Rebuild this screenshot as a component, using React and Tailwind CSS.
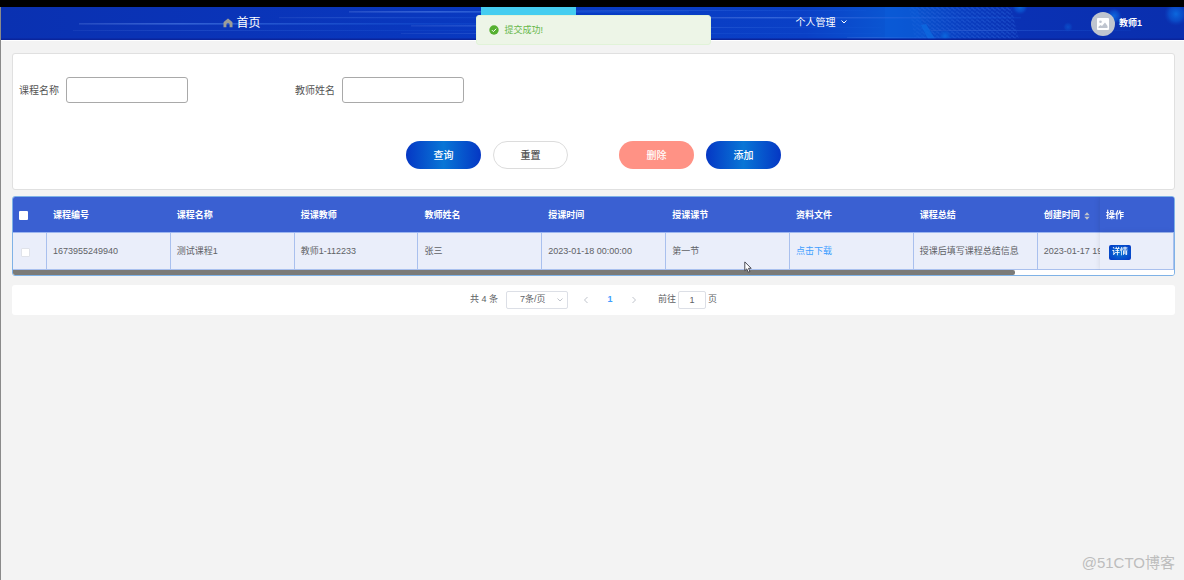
import { useState } from 'react';

const columns = ['课程编号', '课程名称', '授课教师', '教师姓名', '授课时间', '授课课节', '资料文件', '课程总结'];

const rows = [
  {
    id: '1673955249940',
    course: '测试课程1',
    teacher: '教师1-112233',
    name: '张三',
    time: '2023-01-18 00:00:00',
    section: '第一节',
    file: '点击下载',
    summary: '授课后填写课程总结信息',
    created: '2023-01-17 19:',
  },
];

const thClass = 'h-[36px] border-b border-[#9db6f0] bg-[#3a60d2] px-[6px] pt-[2px] text-left font-bold text-white whitespace-nowrap';
const tdClass = 'h-[37px] border-r border-b border-[#a9c0ee] bg-[#eaeefa] px-[6px] pt-[2px] whitespace-nowrap';

const HeaderBackdrop = () => (
  <svg className="absolute inset-0 h-full w-full" viewBox="0 0 1183 33" preserveAspectRatio="none" aria-hidden="true">
    <defs>
      <linearGradient id="base" x1="0" x2="1" y1="0" y2="0">
        <stop offset="0" stopColor="#0a31b1" />
        <stop offset="0.2" stopColor="#0a34b8" />
        <stop offset="0.5" stopColor="#083bc4" />
        <stop offset="0.68" stopColor="#0a40c6" />
        <stop offset="0.75" stopColor="#0a56d2" />
        <stop offset="0.78" stopColor="#0a50cc" />
        <stop offset="0.81" stopColor="#0a40c2" />
        <stop offset="0.86" stopColor="#0a31b4" />
        <stop offset="1" stopColor="#0a2fae" />
      </linearGradient>
      <linearGradient id="streak" x1="0" x2="1" y1="0" y2="0">
        <stop offset="0" stopColor="#5f82e0" stopOpacity="0.3" />
        <stop offset="0.25" stopColor="#4474e0" stopOpacity="0.7" />
        <stop offset="1" stopColor="#1860e0" stopOpacity="0.2" />
      </linearGradient>
      <radialGradient id="glow">
        <stop offset="0" stopColor="#0c68de" />
        <stop offset="0.6" stopColor="#0a55d0" stopOpacity="0.7" />
        <stop offset="1" stopColor="#0a40c0" stopOpacity="0" />
      </radialGradient>
      <pattern id="mesh" width="5" height="4" patternUnits="userSpaceOnUse">
        <path d="M0 1h2l1 2h2" stroke="#2d68dc" strokeWidth="0.8" fill="none" />
      </pattern>
    </defs>
    <rect width="1183" height="33" fill="url(#base)" />
    <path d="M908 0h102l8 33H914z" fill="url(#mesh)" opacity="0.6" />
    <path d="M884 0h32l10 33h-42z" fill="#0a60dc" opacity="0.4" />
    <path d="M920 18l5-1 9 15h-7z" fill="#0c6ce2" opacity="0.7" />
    <g fill="url(#streak)">
      <rect x="78" y="16" width="400" height="1.6" />
      <rect x="348" y="4" width="340" height="1.6" />
      <rect x="278" y="10" width="300" height="1.2" opacity="0.5" />
      <rect x="72" y="23" width="500" height="1" opacity="0.4" />
      <rect x="410" y="18" width="300" height="1.6" opacity="0.6" />
      <rect x="400" y="26" width="480" height="1" opacity="0.5" />
      <rect x="575" y="3" width="290" height="1" opacity="0.6" />
      <rect x="690" y="10" width="330" height="1.4" />
      <rect x="640" y="20" width="240" height="1" opacity="0.5" />
      <rect x="930" y="23" width="200" height="1" opacity="0.6" />
      <rect x="846" y="30" width="110" height="1.2" opacity="0.6" />
    </g>
    <circle cx="944" cy="29" r="7" fill="url(#glow)" />
    <circle cx="1019" cy="0" r="8" fill="url(#glow)" />
    <circle cx="1113" cy="9" r="8" fill="url(#glow)" />
    <circle cx="1067" cy="20" r="5" fill="url(#glow)" opacity="0.5" />
    <circle cx="1175" cy="7" r="12" fill="url(#glow)" />
    <rect y="31.5" width="1183" height="1.5" fill="#0a259c" />
  </svg>
);

const Chevron = ({ d, className }) => (
  <svg className={className} viewBox="0 0 8 8" fill="none" stroke="currentColor" aria-hidden="true">
    <path d={d} />
  </svg>
);

const Header = () => (
  <header className="relative flex h-[34px] items-stretch border-b border-white text-white">
    <HeaderBackdrop />
    <nav className="relative ml-[8.2%] grid flex-1 grid-cols-[287fr_287fr_299fr] justify-items-center">
      <a href="#home" className="flex items-center gap-1 pb-[2px] text-[12px]">
        <svg className="h-[10px] w-[10px]" viewBox="0 0 10 10" fill="#9c9c98" aria-hidden="true">
          <path d="M5 .6Q5.400 .6 5.700 .9L9 3.800Q9.500 4.300 9.500 5V9.200H6.600V6.500Q6.600 5 5 5T3.400 6.500V9.200H.5V5Q.5 4.300 1 3.800L4.300 .9Q4.600 .6 5 .6z" />
        </svg>
        首页
      </a>
      <a href="#course" aria-label="课程" className="w-[95px] bg-[#45cdf0]" />
      <a href="#personal" className="flex items-center gap-1 pb-[3px] text-[10px]">
        个人管理
        <Chevron d="M1.500 2.500L4 5l2.500-2.500" className="h-2 w-2" />
      </a>
    </nav>
    <div className="relative flex w-[18%] items-center justify-end gap-1 pr-[42px] text-[9px] font-bold">
      <span className="flex h-6 w-6 items-center justify-center rounded-full bg-[#bfc5cf]">
        <svg className="h-[12px] w-[12px]" viewBox="0 0 12 12" aria-hidden="true">
          <rect width="12" height="12" rx="1" fill="#fff" />
          <circle cx="3.500" cy="3.800" r="1.300" fill="#bfc5cf" />
          <path d="M1.500 10V8.700L3.500 7l1.500 1 3-3.500L10.500 8v2z" fill="#bfc5cf" />
        </svg>
      </span>
      <span>教师1</span>
    </div>
  </header>
);

const SearchField = ({ id, label, value, onChange }) => (
  <div className="flex items-center gap-[7px]">
    <label htmlFor={id} className="text-[10px] text-[#555]">{label}</label>
    <input
      id={id}
      value={value}
      onChange={(e) => onChange(e.target.value)}
      className="h-[26px] w-[122px] rounded-[3px] border border-[#a9a9a9] bg-white px-2 text-[10px] outline-none"
    />
  </div>
);

const pill = 'h-7 w-[75px] rounded-full text-[10px] font-medium text-white';

const App = () => {
  const [courseName, setCourseName] = useState('');
  const [teacherName, setTeacherName] = useState('');
  const [selected, setSelected] = useState([]);
  const [pageSize, setPageSize] = useState('7');
  const [page, setPage] = useState('1');

  const toggleRow = (id) => {
    setSelected(selected.includes(id) ? selected.filter((s) => s !== id) : [...selected, id]);
  };

  const toggleAll = () => {
    setSelected(selected.length === rows.length ? [] : rows.map((r) => r.id));
  };

  return (
    <div className="relative flex min-h-screen flex-col bg-[#f3f3f3] font-['Liberation_Sans','Noto_Sans_CJK_SC',sans-serif] text-[9px] text-[#606266]">
      <div className="h-[7px] bg-black" />
      <div className="flex-1 border-l border-[#8a8a8a]">
        <Header />

        <main className="pt-3 pr-[9px] pl-[11px]">
          <form
            onSubmit={(e) => e.preventDefault()}
            className="rounded-[3px] border border-[#e0e0e0] bg-white px-[6px] pt-[23px] pb-5"
          >
            <div className="flex gap-[107px]">
              <SearchField id="courseName" label="课程名称" value={courseName} onChange={setCourseName} />
              <SearchField id="teacherName" label="教师姓名" value={teacherName} onChange={setTeacherName} />
            </div>
            <div className="mt-[38px] flex justify-center gap-[51px]">
              <div className="flex gap-3">
                <button type="submit" className={`${pill} bg-[linear-gradient(90deg,#0537c4,#0876d6_50%,#0537c4)]`}>查询</button>
                <button type="reset" className="h-7 w-[75px] rounded-full border border-[#dcdcdc] bg-white text-[10px] font-medium text-[#555]">重置</button>
              </div>
              <div className="flex gap-3">
                <button type="button" className={`${pill} bg-[#ff9285]`}>删除</button>
                <button type="button" className={`${pill} bg-[linear-gradient(90deg,#0537c4,#0876d6_50%,#0537c4)]`}>添加</button>
              </div>
            </div>
          </form>

          <section className="mt-[6px] overflow-hidden rounded-[3px] border border-[#7fb2e6] bg-white">
            <div className="overflow-hidden">
              <table className="w-[1346px] table-fixed border-separate border-spacing-0">
                <colgroup>
                  <col className="w-[34px]" />
                  {columns.map((c) => <col key={c} className="w-[9.2%]" />)}
                  <col />
                  <col className="w-[74px]" />
                </colgroup>
                <thead>
                  <tr>
                    <th className={thClass}>
                      <input type="checkbox" aria-label="全选" checked={selected.length === rows.length} onChange={toggleAll} className="block h-[9px] w-[9px] appearance-none rounded-[1px] bg-white checked:bg-[#409eff]" />
                    </th>
                    {columns.map((c) => <th key={c} className={thClass}>{c}</th>)}
                    <th className={thClass}>
                      <span className="flex items-center gap-1">
                        创建时间
                        <svg className="h-2 w-[6px]" viewBox="0 0 6 8" fill="#c0c4cc" aria-hidden="true">
                          <path d="M3 .3L5.700 3.300H.3zM3 7.700L.3 4.700h5.400z" />
                        </svg>
                      </span>
                    </th>
                    <th className={`${thClass} sticky right-0 shadow-[0_0_6px_rgba(0,0,0,0.12)]`}>操作</th>
                  </tr>
                </thead>
                <tbody>
                  {rows.map((row) => (
                    <tr key={row.id}>
                      <td className={tdClass}>
                        <input type="checkbox" aria-label={row.course} checked={selected.includes(row.id)} onChange={() => toggleRow(row.id)} className="ml-[2px] block h-[9px] w-[9px] appearance-none rounded-[1px] border border-[#e0e3ea] bg-white checked:bg-[#409eff]" />
                      </td>
                      <td className={tdClass}>{row.id}</td>
                      <td className={tdClass}>{row.course}</td>
                      <td className={tdClass}>{row.teacher}</td>
                      <td className={tdClass}>{row.name}</td>
                      <td className={tdClass}>{row.time}</td>
                      <td className={tdClass}>{row.section}</td>
                      <td className={tdClass}><a href="#download" className="text-[#409eff]">{row.file}</a></td>
                      <td className={tdClass}>{row.summary}</td>
                      <td className={tdClass}>{row.created}</td>
                      <td className={`${tdClass} sticky right-0 shadow-[0_0_6px_rgba(0,0,0,0.1)]`}>
                        <button type="button" className="ml-[3px] block h-[15px] w-[22px] rounded-[2px] bg-[radial-gradient(#0876d6,#0537c4)] text-[8px] font-medium text-white">详情</button>
                      </td>
                    </tr>
                  ))}
                </tbody>
              </table>
            </div>
            <div className="h-[5px] bg-white">
              <div className="h-full w-[86.3%] rounded-r-[2px] bg-[#7b7b78]" />
            </div>
          </section>

          <footer className="mt-[9px] flex h-[30px] items-center justify-center rounded-[3px] bg-white">
            <span>共 4 条</span>
            <div className="relative ml-2">
              <select
                aria-label="每页条数"
                value={pageSize}
                onChange={(e) => setPageSize(e.target.value)}
                className="block h-[18px] w-[62px] appearance-none rounded-[2px] border border-[#dcdfe6] bg-white pl-[13px] text-[9px]"
              >
                <option value="7">7条/页</option>
              </select>
              <Chevron d="M1.500 2.500L4 5l2.500-2.500" className="pointer-events-none absolute top-[5px] right-1 h-2 w-2 text-[#c0c4cc]" />
            </div>
            <div className="mx-[14px] flex items-center gap-4 text-[#c0c4cc]">
              <button type="button" aria-label="上一页"><Chevron d="M5.500 1L2.500 4l3 3" className="h-2 w-2" /></button>
              <button type="button" className="w-2 font-bold text-[#409eff]">1</button>
              <button type="button" aria-label="下一页"><Chevron d="M2.500 1l3 3-3 3" className="h-2 w-2" /></button>
            </div>
            <label htmlFor="page" className="ml-[6px]">前往</label>
            <input
              id="page"
              value={page}
              onChange={(e) => setPage(e.target.value)}
              className="mx-[2px] h-[18px] w-[28px] rounded-[2px] border border-[#dcdfe6] text-center text-[9px]"
            />
            <span>页</span>
          </footer>
        </main>
      </div>

      <div role="alert" className="absolute inset-x-0 top-[15px] mx-auto flex h-[30px] w-[235px] translate-x-[1px] items-center gap-[6px] rounded-[3px] border border-[#e1f3d8] bg-[#edf5e7] px-3 text-[#67b84a]">
        <svg className="h-[10px] w-[10px]" viewBox="0 0 10 10" aria-hidden="true">
          <circle cx="5" cy="5" r="4.700" fill="#55b030" />
          <path d="M2.900 5.100l1.500 1.500 2.800-2.900" fill="none" stroke="#fff" strokeWidth="1" />
        </svg>
        <span className="pt-[2px]">提交成功!</span>
      </div>

      <svg className="pointer-events-none absolute top-[261px] left-[744px] h-3 w-2" viewBox="0 0 8 12" aria-hidden="true">
        <path d="M.8 .9V9.700L2.800 7.900L4.200 11.200L5.900 10.500L4.500 7.300H7.200z" fill="#fff" stroke="#3a3a44" strokeWidth="0.9" />
      </svg>

      <div className="absolute right-[9px] bottom-[6px] text-[15px] text-[#bdbdbd]">@51CTO博客</div>
    </div>
  );
};

export default App;
